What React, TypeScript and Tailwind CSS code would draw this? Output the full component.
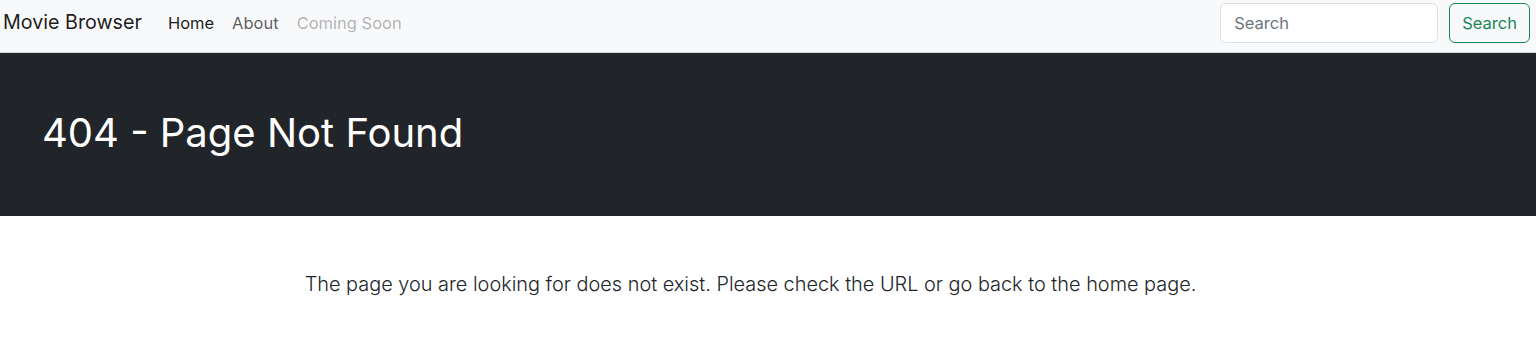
export default function App() {
  return (
    <div className="min-h-[348px] bg-white">
      <div className="font-['Inter',sans-serif]">
        <nav className="flex h-[53px] items-start border-b border-[#d3d5d8] bg-[#f8f9fa] pt-[3px] pl-[3px] pr-[6px]">
          <div className="flex h-[40px] items-center">
            <span className="mr-[26px] text-[19.7px] text-[#000000e6]">Movie Browser</span>
            <div className="flex items-center gap-[18px] text-[16.5px]">
              <span className="text-[#000000e6]">Home</span>
              <span className="text-[#000000a6]">About</span>
              <span className="text-[#0000004d]">Coming Soon</span>
            </div>
          </div>
          <div className="ml-auto flex items-center gap-[11px]">
            <div className="flex h-[40px] w-[218px] items-center rounded-[6px] border border-[#dee2e6] bg-white px-[13px] text-[16.5px] text-[#6c757d]">
              Search
            </div>
            <div className="flex h-[40px] items-center rounded-[6px] border border-[#198754] px-[12px] text-[16.5px] text-[#198754]">
              Search
            </div>
          </div>
        </nav>
        <div className="flex h-[163px] items-center bg-[#212529] pl-[42px]">
          <h1 className="pb-[3px] text-[40px] font-normal leading-none text-white">404 - Page Not Found</h1>
        </div>
        <div className="flex justify-center pt-[54px] pr-[35px]">
          <p className="text-[19.9px] font-light text-[#212529]">
            The page you are looking for does not exist. Please check the URL or go back to the home page.
          </p>
        </div>
      </div>
    </div>
  );
}
